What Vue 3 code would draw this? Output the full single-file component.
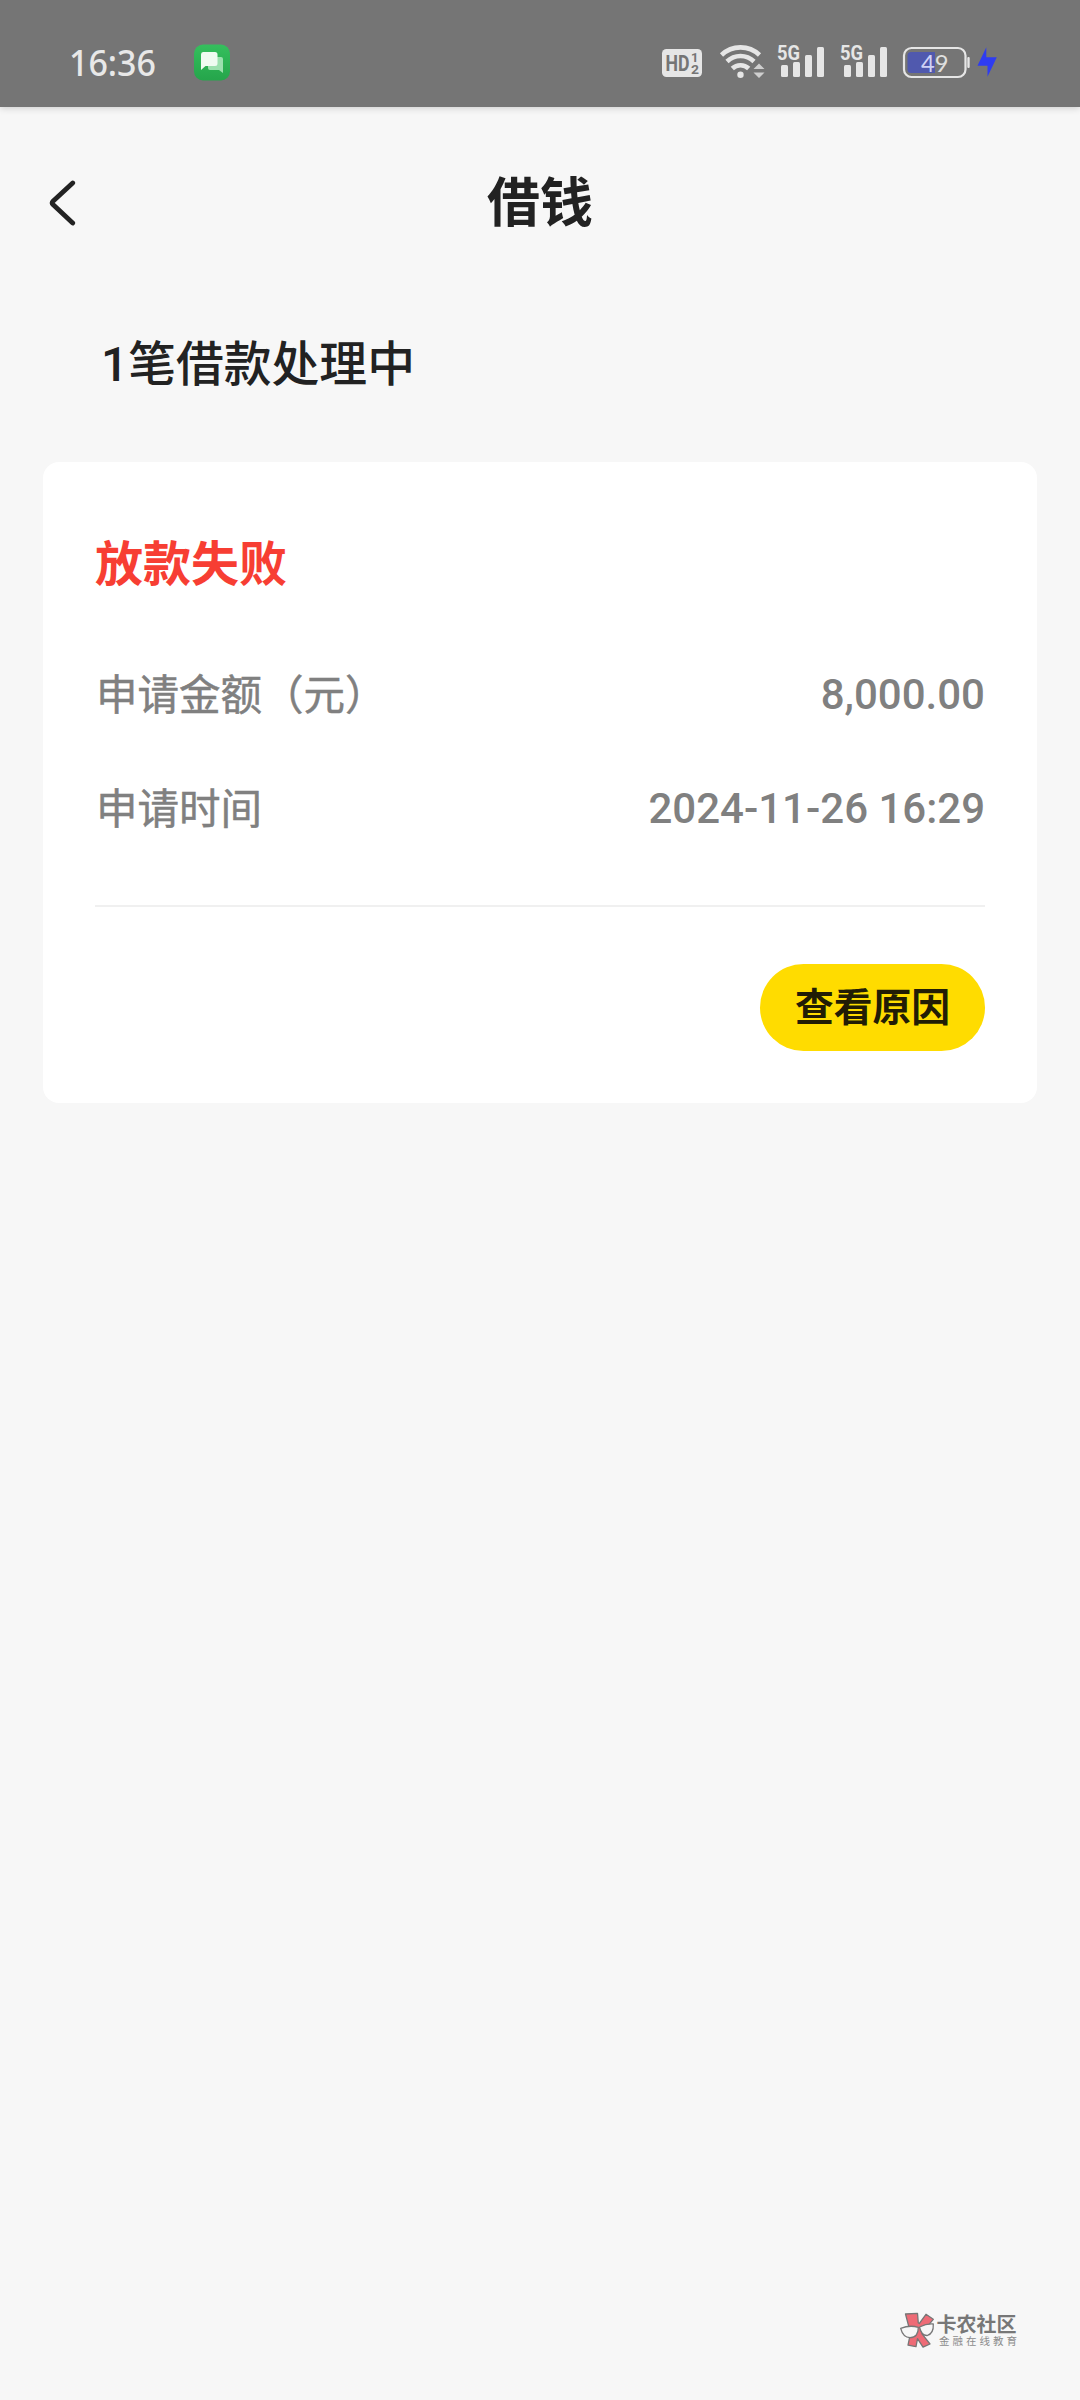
<script setup>
const rows = [
  { label: '申请金额（元）', value: '8,000.00' },
  { label: '申请时间', value: '2024-11-26 16:29' },
]
</script>

<template>
  <div class="screen">
    <div class="status">
      <svg class="status-art" width="1080" height="107" viewBox="0 0 1080 107">
        <defs>
          <linearGradient id="chatGreen" x1="0" y1="0" x2="0" y2="1">
            <stop offset="0" stop-color="#35bf5d" />
            <stop offset="1" stop-color="#25a54b" />
          </linearGradient>
        </defs>
        <!-- clock -->
        <text x="69" y="75.500" class="clock" textLength="87" lengthAdjust="spacingAndGlyphs">16:36</text>
        <!-- chat app -->
        <rect x="194" y="44.500" width="36" height="36" rx="9" fill="url(#chatGreen)" />
        <path d="M208 57h13q2 0 2 2v14l-4-3h-9q-2 0-2-2z" fill="#9be0ae" />
        <path d="M203 52h12q2.500 0 2.500 2.500v9q0 2.500-2.500 2.500h-9.500l-4.500 4v-15.500q0-2.500 2-2.500z" fill="#effbf1" />
        <!-- HD -->
        <rect x="662" y="49" width="40" height="28" rx="4.500" fill="#e6e6e6" />
        <text x="665.500" y="70.500" class="hd" textLength="24" lengthAdjust="spacingAndGlyphs">HD</text>
        <text x="691" y="62" class="tiny">1</text>
        <text x="691" y="73.500" class="tiny" textLength="8" lengthAdjust="spacingAndGlyphs">2</text>
        <!-- wifi -->
        <g fill="none" stroke="#e6e6e6" stroke-width="4.600">
          <path d="M721.500 55a27.500 27.500 0 0 1 38 0" />
          <path d="M727 61.500a19.500 19.500 0 0 1 27 0" />
          <path d="M732.300 68.500a11.800 11.800 0 0 1 16.400 0" />
        </g>
        <circle cx="740.500" cy="74.800" r="3.200" fill="#e6e6e6" />
        <path d="M753.500 69l5.500-5.500 5.500 5.500zM753.500 72.500h11l-5.500 5.500z" fill="#cfcfcf" />
        <!-- signals -->
        <g v-for="x in [778, 841]" :key="x" fill="#e6e6e6">
          <text :x="x - 1" y="60" class="gen" textLength="23" lengthAdjust="spacingAndGlyphs">5G</text>
          <rect :x="x + 3" y="65" width="7" height="12" rx="1.500" />
          <rect :x="x + 15" y="62" width="7" height="15" rx="1.500" />
          <rect :x="x + 27" y="55" width="7" height="22" rx="1.500" />
          <rect :x="x + 39" y="47" width="7" height="30" rx="1.500" />
        </g>
        <!-- battery -->
        <path d="M911 52h24v21h-24q-3.500 0-3.500-3.500v-14q0-3.500 3.500-3.500z" fill="#5059ae" />
        <rect x="904" y="48" width="61.500" height="29" rx="7.500" fill="none" stroke="#e6e6e6" stroke-width="2.200" />
        <rect x="967.300" y="57" width="2.400" height="11" rx="1" fill="#e6e6e6" />
        <text x="921" y="71.500" class="level" textLength="27.500" lengthAdjust="spacingAndGlyphs"><tspan fill="#cfd2f5">4</tspan><tspan>9</tspan></text>
        <path d="M986.300 47.300v10h10.500l-9.300 19.500v-11h-10z" fill="#2e3cf2" />
      </svg>
    </div>

    <header class="nav">
      <svg class="back" width="28" height="46" viewBox="0 0 28 46">
        <path d="M23.700 3L4 21.200q-1.600 1.700 0 3.400L23.700 43" fill="none" stroke="#222" stroke-width="4.800" stroke-linecap="round" />
      </svg>
      <h1 class="title">借钱</h1>
    </header>

    <p class="summary">1笔借款处理中</p>

    <section class="card">
      <h2 class="state">放款失败</h2>
      <div v-for="row in rows" :key="row.label" class="row">
        <span class="label">{{ row.label }}</span>
        <span class="value">{{ row.value }}</span>
      </div>
      <div class="divider"></div>
      <div class="actions">
        <button class="reason">查看原因</button>
      </div>
    </section>

    <svg class="brand" width="124" height="44" viewBox="0 0 124 44">
      <g stroke="#777" stroke-width="1.300" stroke-linejoin="round">
        <path d="M8.500 6l12-.7.8 9.700 1 .5L29 6.300l7.300 5-8.800 10.500-2.500 4L33 36l-7 3.200-5.500-8.500-1.500 8-8-1.500 2.500-12z" fill="#ee6b76" />
        <path d="M3.700 20.300q9-3.500 17.600-1 .2 10.200-8.300 10.300-7-.3-9.300-9.300zM22.500 19q7-3.500 13.800-3 .5 9.500-6 11.500-6 .3-7.800-8.500z" fill="#f7f7f7" />
      </g>
      <text x="39.500" y="23.500" class="brand-name" textLength="80" lengthAdjust="spacingAndGlyphs">卡农社区</text>
      <text x="42" y="37" class="brand-sub" textLength="78">金融在线教育</text>
    </svg>
  </div>
</template>

<style>
body {
  margin: 0;
  background: #f7f7f7;
}
</style>

<style scoped>
.screen {
  position: relative;
  width: 1080px;
  height: 2400px;
  overflow: hidden;
  background: #f7f7f7;
  color: #222;
  font-family: Roboto, "Noto Sans CJK SC", sans-serif;
}
.status {
  height: 107px;
  background: #757575;
  box-shadow: 0 1px 7px rgba(0, 0, 0, 0.18);
}
.status-art {
  display: block;
}
.clock {
  font: 500 37px "Noto Sans", sans-serif;
  fill: #e8e8e8;
}
.hd {
  font: 700 22px Roboto, sans-serif;
  fill: #757575;
}
.tiny {
  font: 700 13px Roboto, sans-serif;
  fill: #757575;
}
.gen {
  font: 700 21px Roboto, sans-serif;
}
.level {
  font: 400 24px Lato, sans-serif;
  fill: #e0e0e0;
}
.nav {
  display: grid;
  grid-template-columns: 150px 1fr 150px;
  align-items: center;
  height: 193px;
}
.back {
  margin: 0 0 1px 49px;
}
.title {
  margin: 0;
  text-align: center;
  font-size: 53px;
  line-height: 80px;
  font-weight: 700;
}
.summary {
  margin: 0;
  padding: 1px 0 32px 101px;
  font-size: 47.800px;
  line-height: 129px;
  font-weight: 500;
}
.card {
  box-sizing: border-box;
  height: 641px;
  margin: 0 43px;
  padding: 52px 52px 51px;
  border-radius: 16px;
  background: #fff;
}
.state {
  margin: 0 0 21px;
  color: #f73e33;
  font-size: 48px;
  line-height: 102px;
  padding-bottom: 1px;
  font-weight: 700;
}
.row {
  display: flex;
  justify-content: space-between;
  height: 114px;
  line-height: 114px;
  font-size: 41.500px;
  color: #808080;
}
.label {
  padding: 1px 0 0 1px;
  -webkit-text-stroke: 0.5px #808080;
}
.value {
  font-size: 42px;
  font-weight: 500;
}
.divider {
  height: 2px;
  margin: 39px 0 57px;
  background: #f0f0f0;
}
.actions {
  display: flex;
  justify-content: flex-end;
}
.reason {
  width: 225px;
  height: 87px;
  padding: 1px 0 0;
  border: 0;
  border-radius: 44px;
  background: #ffdc00;
  color: #221d05;
  font-family: inherit;
  font-size: 38.800px;
  line-height: 86px;
  font-weight: 700;
}
.brand {
  position: absolute;
  left: 897px;
  top: 2308px;
}
.brand-name {
  font: 700 20px "Noto Sans CJK SC", sans-serif;
  fill: #777;
}
.brand-sub {
  font: 400 10.500px "Noto Sans CJK SC", sans-serif;
  fill: #8c8c8c;
}
</style>
